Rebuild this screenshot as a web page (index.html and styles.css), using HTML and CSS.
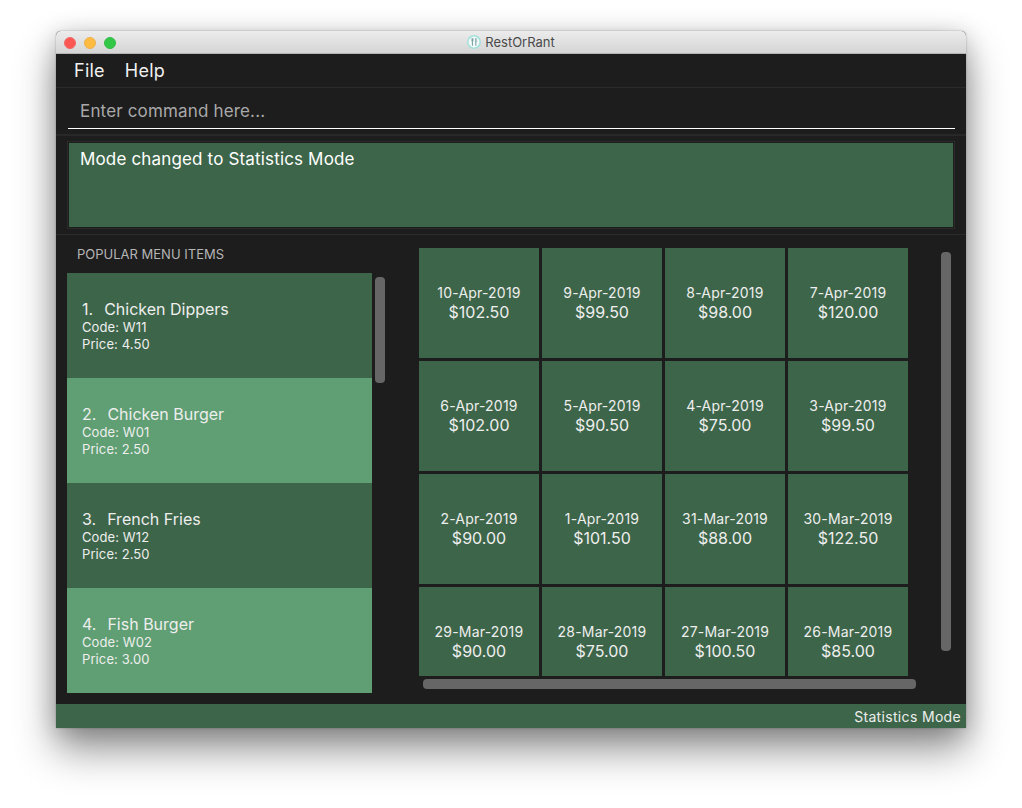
FILE: index.html
```html
<!DOCTYPE html>
<html lang="en">
<head>
<meta charset="utf-8">
<title>RestOrRant</title>
<link rel="stylesheet" href="styles.css">
</head>
<body>
<div class="window">
  <header class="titlebar">
    <div class="lights"><span class="light red"></span><span class="light yellow"></span><span class="light green"></span></div>
    <div class="title">
      <svg class="app-icon" viewBox="0 0 14 14" width="14" height="14" aria-hidden="true">
        <circle cx="7" cy="7" r="6.2" fill="#f4fbfa" stroke="#a4e0da" stroke-width="1.5"/>
        <path d="M5.4 3.2v7.6M8.8 3.2v7.6" fill="none" stroke="#6f9a9c" stroke-width="1"/>
        <path d="M4.4 3.2v2.4q0 1 1 1t1-1V3.2M8.8 3.2q1.3 1 1 3.6H8.8" fill="none" stroke="#8fb2b3" stroke-width=".6"/>
      </svg>
      <span>RestOrRant</span>
    </div>
  </header>
  <nav class="menubar"><span>File</span><span>Help</span></nav>
  <section class="command"><div class="command-input">Enter command here...</div></section>
  <section class="result"><div class="result-box"><div class="result-text">Mode changed to Statistics Mode</div></div></section>
  <main class="content">
    <aside class="popular">
      <h2 class="popular-title">POPULAR MENU ITEMS</h2>
      <div class="popular-body">
        <ul class="items">
          <li class="item"><div class="item-name"><span class="item-no">1.</span>Chicken Dippers</div><div class="item-line">Code: W11</div><div class="item-line">Price: 4.50</div></li>
          <li class="item alt"><div class="item-name"><span class="item-no">2.</span>Chicken Burger</div><div class="item-line">Code: W01</div><div class="item-line">Price: 2.50</div></li>
          <li class="item"><div class="item-name"><span class="item-no">3.</span>French Fries</div><div class="item-line">Code: W12</div><div class="item-line">Price: 2.50</div></li>
          <li class="item alt"><div class="item-name"><span class="item-no">4.</span>Fish Burger</div><div class="item-line">Code: W02</div><div class="item-line">Price: 3.00</div></li>
        </ul>
        <div class="list-track"><div class="thumb list-thumb"></div></div>
      </div>
    </aside>
    <section class="stats">
      <div class="stats-main">
        <div class="grid">
          <div class="cell"><div class="date">10-Apr-2019</div><div class="amount">$102.50</div></div>
          <div class="cell"><div class="date">9-Apr-2019</div><div class="amount">$99.50</div></div>
          <div class="cell"><div class="date">8-Apr-2019</div><div class="amount">$98.00</div></div>
          <div class="cell"><div class="date">7-Apr-2019</div><div class="amount">$120.00</div></div>
          <div class="cell"><div class="date">6-Apr-2019</div><div class="amount">$102.00</div></div>
          <div class="cell"><div class="date">5-Apr-2019</div><div class="amount">$90.50</div></div>
          <div class="cell"><div class="date">4-Apr-2019</div><div class="amount">$75.00</div></div>
          <div class="cell"><div class="date">3-Apr-2019</div><div class="amount">$99.50</div></div>
          <div class="cell"><div class="date">2-Apr-2019</div><div class="amount">$90.00</div></div>
          <div class="cell"><div class="date">1-Apr-2019</div><div class="amount">$101.50</div></div>
          <div class="cell"><div class="date">31-Mar-2019</div><div class="amount">$88.00</div></div>
          <div class="cell"><div class="date">30-Mar-2019</div><div class="amount">$122.50</div></div>
          <div class="cell"><div class="date">29-Mar-2019</div><div class="amount">$90.00</div></div>
          <div class="cell"><div class="date">28-Mar-2019</div><div class="amount">$75.00</div></div>
          <div class="cell"><div class="date">27-Mar-2019</div><div class="amount">$100.50</div></div>
          <div class="cell"><div class="date">26-Mar-2019</div><div class="amount">$85.00</div></div>
        </div>
        <div class="h-track"><div class="thumb h-thumb"></div></div>
      </div>
      <div class="v-track"><div class="thumb v-thumb"></div></div>
    </section>
  </main>
  <footer class="statusbar">Statistics Mode</footer>
</div>
</body>
</html>
```
FILE: styles.css
```css
* { box-sizing: border-box; }
html, body { margin: 0; padding: 0; height: 100%; overflow: hidden; background: #fff; }
body { padding: 31px 56px 0; font-family: Inter, "Liberation Sans", sans-serif; color: #fff; }

.window {
  width: 910px;
  height: 697px;
  display: flex;
  flex-direction: column;
  background: #1d1d1d;
  border-radius: 5px 5px 0 0;
  box-shadow: 0 0 2px rgba(0,0,0,.3), 0 22px 40px rgba(0,0,0,.42), 0 4px 24px rgba(0,0,0,.2);
}

.titlebar {
  height: 23px;
  flex: none;
  position: relative;
  display: flex;
  align-items: center;
  justify-content: center;
  background: linear-gradient(#ececec, #d5d5d5);
  border-radius: 5px 5px 0 0;
  border-bottom: 1px solid #b4b4b4;
}
.lights { position: absolute; left: 8px; top: 6px; display: flex; gap: 8px; }
.light { width: 12px; height: 12px; border-radius: 50%; }
.red { background: #fc5753; border: 1px solid #f06a68; }
.yellow { background: #fdbc40; border: 1px solid #eeb04d; }
.green { background: #33c748; border: 1px solid #35bb4a; }
.title { display: flex; align-items: center; gap: 4px; font-size: 13px; color: #4a4a4a; }

.menubar {
  height: 34px;
  flex: none;
  display: flex;
  align-items: center;
  gap: 20px;
  padding-left: 18px;
  font-size: 18px;
  letter-spacing: .25px;
  color: #f0f0f0;
  border-bottom: 1px solid #2a2a2a;
}

.command { height: 48px; flex: none; padding: 0 11px 0 12px; border-bottom: 2px solid #282828; }
.command-input {
  height: 41px;
  padding: 11px 0 0 12px;
  font-size: 17px;
  line-height: 24px;
  letter-spacing: .16px;
  color: #a9a9a9;
  border-bottom: 1px solid #fff;
}

.result { height: 99px; flex: none; padding: 5px 11px 0; border-bottom: 1px solid #2a2a2a; }
.result-box { height: 88px; padding: 1px; border: 1px solid #2a2a2a; }
.result-text {
  height: 100%;
  padding: 4px 11px;
  font-size: 17px;
  line-height: 24px;
  letter-spacing: .16px;
  background: #3d6549;
}

.content { flex: 1; min-height: 0; display: flex; overflow: hidden; }

.popular { width: 363px; flex: none; padding-left: 11px; }
.popular-title { margin: 0; height: 38px; padding: 10px 0 0 10px; font-size: 13px; line-height: 18px; font-weight: 400; color: #b5b5b5; }
.popular-body { display: flex; }
.items { width: 305px; margin: 0; padding: 0; list-style: none; }
.item { height: 105px; padding: 26px 15px 0; background: #3d6549; color: #eee; }
.item.alt { background: #5f9f73; }
.item-name { font-size: 16px; line-height: 20px; }
.item-no { margin-right: 11px; }
.item-line { font-size: 13px; line-height: 17px; letter-spacing: .1px; }
.list-track { padding: 4px 0 0 3px; }
.thumb { background: #666; border-radius: 4px; }
.list-thumb { width: 10px; height: 106px; }

.stats { flex: 1; display: flex; padding-top: 13px; }
.stats-main { width: 522px; flex: none; display: flex; flex-direction: column; }
.grid {
  width: 522px;
  height: 428px;
  overflow: hidden;
  display: grid;
  grid-template-columns: repeat(4, 120px);
  grid-auto-rows: 110px;
  gap: 3px;
}
.cell { display: flex; flex-direction: column; align-items: center; padding-top: 36px; background: #3d6549; color: #eee; }
.date { font-size: 14px; line-height: 18px; letter-spacing: .2px; }
.amount { font-size: 16px; line-height: 20px; }
.h-track { padding: 3px 0 0 4px; }
.h-thumb { width: 493px; height: 10px; }
.v-track { padding: 4px 0 0 0; }
.v-thumb { width: 10px; height: 399px; }

.statusbar {
  height: 24px;
  flex: none;
  padding-right: 5px;
  text-align: right;
  font-size: 14px;
  line-height: 26px;
  letter-spacing: .33px;
  background: #3d6549;
  color: #eee;
}
```
